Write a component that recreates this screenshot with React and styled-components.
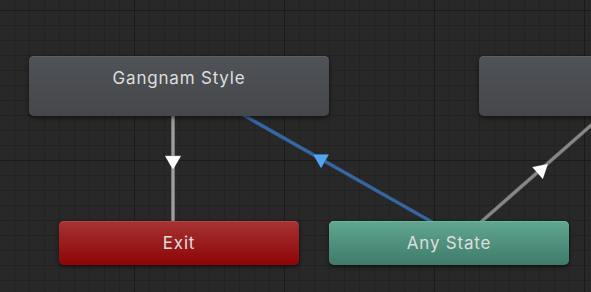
import React from "react";
import styled, { createGlobalStyle } from "styled-components";

const GlobalStyle = createGlobalStyle`
  html, body {
    margin: 0;
    padding: 0;
    background: #282828;
  }
  * {
    box-sizing: border-box;
  }
`;

const tones = {
  normal: { top: "#4f5256", bottom: "#45474b", edge: "#5d6064" },
  exit: { top: "#a63333", bottom: "#8e0505", edge: "#b44545" },
  any: { top: "#60a791", bottom: "#3f7a6a", edge: "#72b59f" },
};

// transitions between states, in canvas pixels
const transitions = [
  { from: [173, 115], to: [173, 221], arrow: [173, 160.5], color: "#8d8d8d", core: "#a5a5a5", head: "#ffffff" },
  { from: [432, 222], to: [238, 112], arrow: [321, 159], color: "#33619a", core: "#386ba4", head: "#55a2ee" },
  { from: [481, 222], to: [630, 91], arrow: [541, 170], color: "#7b7b7b", core: "#8c8c8c", head: "#ffffff" },
];

const states = [
  { id: "gangnam", label: "Gangnam Style", x: 29, y: 56, w: 300, tall: true, tone: "normal" },
  { id: "right", label: "", x: 479, y: 56, w: 300, tall: true, tone: "normal" },
  { id: "exit", label: "Exit", x: 59, y: 221, w: 240, tone: "exit" },
  { id: "any", label: "Any State", x: 329, y: 221, w: 240, tone: "any" },
];

const arrowPoints = ([cx, cy], [fx, fy], [tx, ty], r = 9.5) => {
  const a = Math.atan2(ty - fy, tx - fx);
  return [0, 1, 2]
    .map((i) => {
      const t = a + (i * 2 * Math.PI) / 3;
      return `${(cx + Math.cos(t) * r).toFixed(2)},${(cy + Math.sin(t) * r).toFixed(2)}`;
    })
    .join(" ");
};

const App = () => {
  return (
    <>
      <GlobalStyle />
      <GraphCanvas>
        <Edges viewBox="0 0 591 292">
          {transitions.map((t, i) => (
            <g key={i}>
              <line x1={t.from[0]} y1={t.from[1]} x2={t.to[0]} y2={t.to[1]} stroke={t.color} strokeWidth="3.6" />
              <line x1={t.from[0]} y1={t.from[1]} x2={t.to[0]} y2={t.to[1]} stroke={t.core} strokeWidth="1.4" />
              <polygon
                points={arrowPoints(t.arrow, t.from, t.to)}
                fill={t.head}
                stroke="rgba(0,0,0,0.25)"
                strokeWidth="0.8"
              />
            </g>
          ))}
        </Edges>
        {states.map((s) => (
          <StateNode key={s.id} $x={s.x} $y={s.y} $w={s.w} $tall={s.tall} $tone={s.tone}>
            <Label>{s.label}</Label>
          </StateNode>
        ))}
      </GraphCanvas>
    </>
  );
};

const GraphCanvas = styled.div`
  position: relative;
  width: 591px;
  height: 292px;
  overflow: hidden;
  background-color: #282828;
  background-image: linear-gradient(to right, #1b1b1b 1px, transparent 1px),
    linear-gradient(to bottom, #1b1b1b 1px, transparent 1px),
    linear-gradient(to right, #222222 1px, transparent 1px),
    linear-gradient(to bottom, #222222 1px, transparent 1px);
  background-size: 150px 150px, 150px 150px, 15px 15px, 15px 15px;
  background-position: 134px 10px, 134px 10px, 14px 10px, 14px 10px;
`;

const Edges = styled.svg`
  position: absolute;
  inset: 0;
  width: 591px;
  height: 292px;
`;

const StateNode = styled.div`
  position: absolute;
  left: ${(p) => p.$x}px;
  top: ${(p) => p.$y}px;
  width: ${(p) => p.$w}px;
  height: ${(p) => (p.$tall ? 60 : 44)}px;
  display: flex;
  flex-direction: column;
  border-radius: 5px;
  background: linear-gradient(
    to bottom,
    ${(p) => tones[p.$tone].top},
    ${(p) => tones[p.$tone].bottom}
  );
  box-shadow: inset 0 1px 0 ${(p) => tones[p.$tone].edge}, 0 2px 4px rgba(0, 0, 0, 0.55);
`;

const Label = styled.div`
  height: 44px;
  display: flex;
  align-items: center;
  justify-content: center;
  font-family: Inter, "Noto Sans", sans-serif;
  font-size: 17px;
  letter-spacing: 0.8px;
  color: #dedede;
`;

export default App;
